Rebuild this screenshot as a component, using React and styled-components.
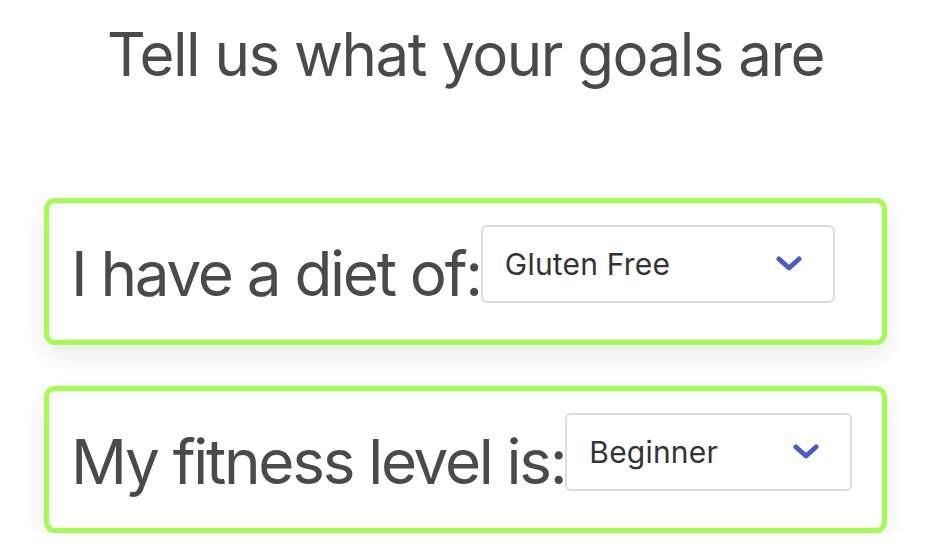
import styled, { createGlobalStyle } from 'styled-components'

const Global = createGlobalStyle`
    body {
        margin: 0;
        background: #fff;
        font-family: Inter, "Noto Sans", sans-serif;
        color: #4a4a4a;
    }
`

const Page = styled.div`
    width: 843px;
    margin-left: 44px;
    display: flex;
    flex-direction: column;
`

const Heading = styled.h1`
    margin: 18px 0 0 0;
    font-size: 60px;
    font-weight: 400;
    line-height: 73px;
    text-align: center;
    letter-spacing: -1.5px;
`

const Card = styled.div`
    box-sizing: border-box;
    height: 147px;
    margin-top: ${p => p.$top}px;
    border: 5px solid #a3fc50;
    border-radius: 11px;
    background: #fff;
    box-shadow: 0 10px 22px rgba(0, 0, 0, 0.09);
    display: flex;
    align-items: flex-start;
    padding: 22px 0 0 22px;
`

const Label = styled.span`
    margin-top: 10px;
    font-size: 62px;
    line-height: 77px;
    letter-spacing: -2.3px;
    white-space: nowrap;
`

const Select = styled.div`
    box-sizing: border-box;
    width: ${p => p.$width}px;
    height: 78px;
    border: 2px solid #dcdcdc;
    border-radius: 6px;
    display: flex;
    align-items: center;
    justify-content: space-between;
    padding: 0 31px 0 22px;
    font-size: 30px;
    letter-spacing: 0.2px;
    color: #333;
    background: #fff;
`

const Chevron = () => (
    <svg width="26" height="16" viewBox="0 0 26 16">
        <path d="M3 3 L13 12 L23 3" fill="none" stroke="#4b5bc6" strokeWidth="5" strokeLinecap="round" strokeLinejoin="round" />
    </svg>
)

const rows = [
    { label: 'I have a diet of:', value: 'Gluten Free', width: 354, top: 107 },
    { label: 'My fitness level is:', value: 'Beginner', width: 287, top: 41 },
]

export default function App() {
    return (
        <>
            <Global />
            <Page>
                <Heading>Tell us what your goals are</Heading>
                {rows.map(r => (
                    <Card key={r.label} $top={r.top}>
                        <Label>{r.label}</Label>
                        <Select $width={r.width}>
                            <span>{r.value}</span>
                            <Chevron />
                        </Select>
                    </Card>
                ))}
            </Page>
        </>
    )
}
